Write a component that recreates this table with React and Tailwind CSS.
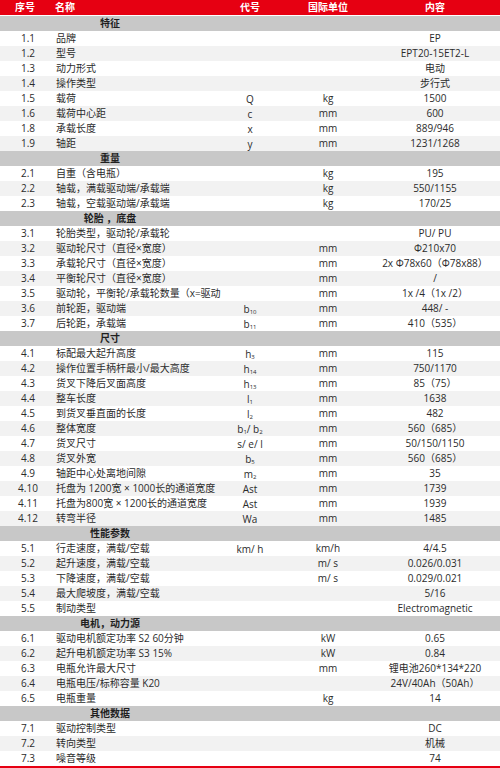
const sections = [
  {
    title: '特征',
    rows: [
      ['1.1', '品牌', '', '', 'EP'],
      ['1.2', '型号', '', '', 'EPT20-15ET2-L'],
      ['1.3', '动力形式', '', '', '电动'],
      ['1.4', '操作类型', '', '', '步行式'],
      ['1.5', '载荷', 'Q', 'kg', '1500'],
      ['1.6', '载荷中心距', 'c', 'mm', '600'],
      ['1.8', '承载长度', 'x', 'mm', '889/946'],
      ['1.9', '轴距', 'y', 'mm', '1231/1268'],
    ],
  },
  {
    title: '重量',
    rows: [
      ['2.1', '自重（含电瓶）', '', 'kg', '195'],
      ['2.2', '轴载，满载驱动端/承载端', '', 'kg', '550/1155'],
      ['2.3', '轴载，空载驱动端/承载端', '', 'kg', '170/25'],
    ],
  },
  {
    title: '轮胎 ，底盘',
    rows: [
      ['3.1', '轮胎类型，驱动轮/承载轮', '', '', 'PU/ PU'],
      ['3.2', '驱动轮尺寸（直径×宽度）', '', 'mm', 'Φ210x70'],
      ['3.3', '承载轮尺寸（直径×宽度）', '', 'mm', '2x Φ78x60（Φ78x88）'],
      ['3.4', '平衡轮尺寸（直径×宽度）', '', 'mm', '/'],
      ['3.5', '驱动轮，平衡轮/承载轮数量（x=驱动', '', 'mm', '1x /4（1x /2）'],
      ['3.6', '前轮距，驱动端', ['b', '10'], 'mm', '448/ -'],
      ['3.7', '后轮距，承载端', ['b', '11'], 'mm', '410（535）'],
    ],
  },
  {
    title: '尺寸',
    rows: [
      ['4.1', '标配最大起升高度', ['h', '3'], 'mm', '115'],
      ['4.2', '操作位置手柄杆最小/最大高度', ['h', '14'], 'mm', '750/1170'],
      ['4.3', '货叉下降后叉面高度', ['h', '13'], 'mm', '85（75）'],
      ['4.4', '整车长度', ['l', '1'], 'mm', '1638'],
      ['4.5', '到货叉垂直面的长度', ['l', '2'], 'mm', '482'],
      ['4.6', '整体宽度', 'b1b2', 'mm', '560（685）'],
      ['4.7', '货叉尺寸', 's/ e/ l', 'mm', '50/150/1150'],
      ['4.8', '货叉外宽', ['b', '5'], 'mm', '560（685）'],
      ['4.9', '轴距中心处离地间隙', ['m', '2'], 'mm', '35'],
      ['4.10', '托盘为 1200宽 × 1000长的通道宽度', 'Ast', 'mm', '1739'],
      ['4.11', '托盘为800宽 × 1200长的通道宽度', 'Ast', 'mm', '1939'],
      ['4.12', '转弯半径', 'Wa', 'mm', '1485'],
    ],
  },
  {
    title: '性能参数',
    rows: [
      ['5.1', '行走速度，满载/空载', 'km/ h', 'km/h', '4/4.5'],
      ['5.2', '起升速度，满载/空载', '', 'm/ s', '0.026/0.031'],
      ['5.3', '下降速度，满载/空载', '', 'm/ s', '0.029/0.021'],
      ['5.4', '最大爬坡度，满载/空载', '', '', '5/16'],
      ['5.5', '制动类型', '', '', 'Electromagnetic'],
    ],
  },
  {
    title: '电机，动力源',
    rows: [
      ['6.1', '驱动电机额定功率 S2 60分钟', '', 'kW', '0.65'],
      ['6.2', '起升电机额定功率 S3 15%', '', 'kW', '0.84'],
      ['6.3', '电瓶允许最大尺寸', '', 'mm', '锂电池260*134*220'],
      ['6.4', '电瓶电压/标称容量 K20', '', '', '24V/40Ah（50Ah）'],
      ['6.5', '电瓶重量', '', 'kg', '14'],
    ],
  },
  {
    title: '其他数据',
    rows: [
      ['7.1', '驱动控制类型', '', '', 'DC'],
      ['7.2', '转向类型', '', '', '机械'],
      ['7.3', '噪音等级', '', '', '74'],
    ],
  },
];

const Code = ({ value }) => {
  if (value === 'b1b2') {
    return (
      <span>
        b<sub className="text-[6px]">1</sub>/ b<sub className="text-[6px]">2</sub>
      </span>
    );
  }
  if (Array.isArray(value)) {
    return (
      <span>
        {value[0]}
        <sub className="text-[6px]">{value[1]}</sub>
      </span>
    );
  }
  return <span>{value}</span>;
};

const Row = ({ row, shaded }) => {
  const [no, name, code, unit, content] = row;
  return (
    <div className={`flex h-[15px] items-center ${shaded ? 'bg-[#f2f2f2]' : 'bg-white'}`}>
      <div className="w-[56px] text-center">{no}</div>
      <div className="w-[158px] whitespace-nowrap">{name}</div>
      <div className="w-[72px] text-center leading-none">
        <Code value={code} />
      </div>
      <div className="w-[84px] text-center">{unit}</div>
      <div className="w-[130px] text-center whitespace-nowrap">{content}</div>
    </div>
  );
};

export default function App() {
  return (
    <div
      className="w-[500px] bg-white text-[10px] leading-[15px] text-[#2b2b2b] border-b-[3px] border-[#e60012]"
      style={{ fontFamily: '"Open Sans", "Noto Sans CJK SC", sans-serif' }}
    >
      <div className="flex h-[16px] items-center bg-[#e60012] font-bold text-white border-b border-white">
        <div className="w-[50px] text-center">序号</div>
        <div className="w-[164px] pl-[5px]">名称</div>
        <div className="w-[72px] text-center">代号</div>
        <div className="w-[84px] text-center">国际单位</div>
        <div className="w-[130px] text-center">内容</div>
      </div>
      {sections.map((section) => (
        <div key={section.title}>
          <div className="flex h-[15px] items-center bg-[#c8c8c8] font-bold text-[#1f1f1f]">
            <div className="w-[220px] text-center">{section.title}</div>
          </div>
          {section.rows.map((row, i) => (
            <Row key={row[0]} row={row} shaded={i % 2 === 1} />
          ))}
        </div>
      ))}
    </div>
  );
}
